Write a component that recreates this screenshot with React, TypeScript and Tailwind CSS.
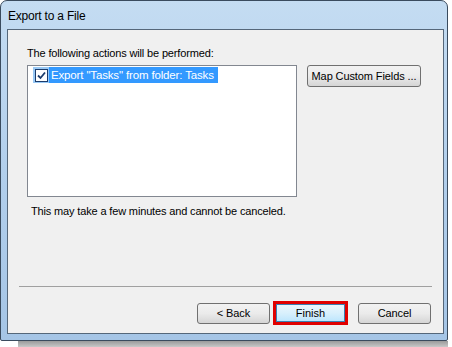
import React from "react";

const font = { fontFamily: '"Liberation Sans", Arial, sans-serif' };

function WinButton({ label, className = "" }: { label: string; className?: string }) {
  return (
    <div
      className={
        "flex items-center justify-center whitespace-nowrap h-[21px] rounded-[3px] border border-[#707070] bg-gradient-to-b from-[#f2f2f2] via-[#ebebeb] to-[#d5d5d5] text-[11px] tracking-[-0.1px] text-black " +
        className
      }
    >
      {label}
    </div>
  );
}

export default function App() {
  return (
    <div className="w-[452px] h-[347px] bg-white relative overflow-hidden" style={font}>
      <div className="w-[448px] h-[341px] rounded-t-[7px] rounded-b-[2px] border border-[#3a4b5e] bg-gradient-to-b from-[#c4dcf2] via-[#b2cfec] to-[#a5c5e6] flex flex-col">
        <div className="h-[28px] pl-[7px] pt-[6px] text-[12px] tracking-[-0.2px] text-black">Export to a File</div>
        <div className="ml-[6px] w-[437px] h-[305px] border border-[#55677a] bg-[#f0f0f0] flex flex-col">
          <div className="pl-[19px] pt-[16px] text-[11px] tracking-[-0.15px] text-[#000] leading-[14px]">
            The following actions will be performed:
          </div>
          <div className="flex mt-[5px] pl-[19px]">
            <div className="w-[270px] h-[132px] bg-white border border-[#828790] pt-[1px] pl-[5px]">
              <div className="flex h-[16px] items-center">
                <div className="w-[16px] h-[16px] bg-[#99c9f5] flex items-center justify-center">
                  <div className="w-[13px] h-[13px] border border-[#1c3c6c] bg-white flex items-center justify-center">
                    <svg width="9" height="9" viewBox="0 0 9 9">
                      <path d="M1 4.5 L3.5 7 L8 1.5" stroke="#1c3c6c" strokeWidth="1.8" fill="none" />
                    </svg>
                  </div>
                </div>
                <div className="h-[16px] bg-[#3399ff] text-white text-[11.5px] tracking-[-0.15px] leading-[16px] pl-[2px] pr-[4px] whitespace-nowrap">
                  Export "Tasks" from folder: Tasks
                </div>
              </div>
            </div>
            <WinButton label="Map Custom Fields ..." className="ml-[10px] w-[114px] h-[22px]" />
          </div>
          <div className="pl-[23px] pt-[6px] text-[11px] tracking-[-0.15px] text-black">
            This may take a few minutes and cannot be canceled.
          </div>
          <div className="mt-auto mx-[11px] border-t border-[#a0a0a0] mb-[14px]" />
          <div className="flex justify-end items-center pr-[12px] mb-[8px]">
            <WinButton label="< Back" className="w-[73px]" />
            <div className="ml-[3px] border-[3px] border-[#e00000] w-[75px] h-[24px] flex">
              <div className="flex-1 flex items-center justify-center bg-gradient-to-b from-[#eaf6fd] via-[#d9f0fc] to-[#bee6fd] border border-[#3c7fb1] text-[11px] text-black">
                Finish
              </div>
            </div>
            <WinButton label="Cancel" className="ml-[10px] w-[73px]" />
          </div>
        </div>
      </div>
      <div className="absolute left-[18px] right-[4px] bottom-0 h-[6px] bg-gradient-to-b from-[#9a9a9a] to-[#c8c8c8]" />
    </div>
  );
}
